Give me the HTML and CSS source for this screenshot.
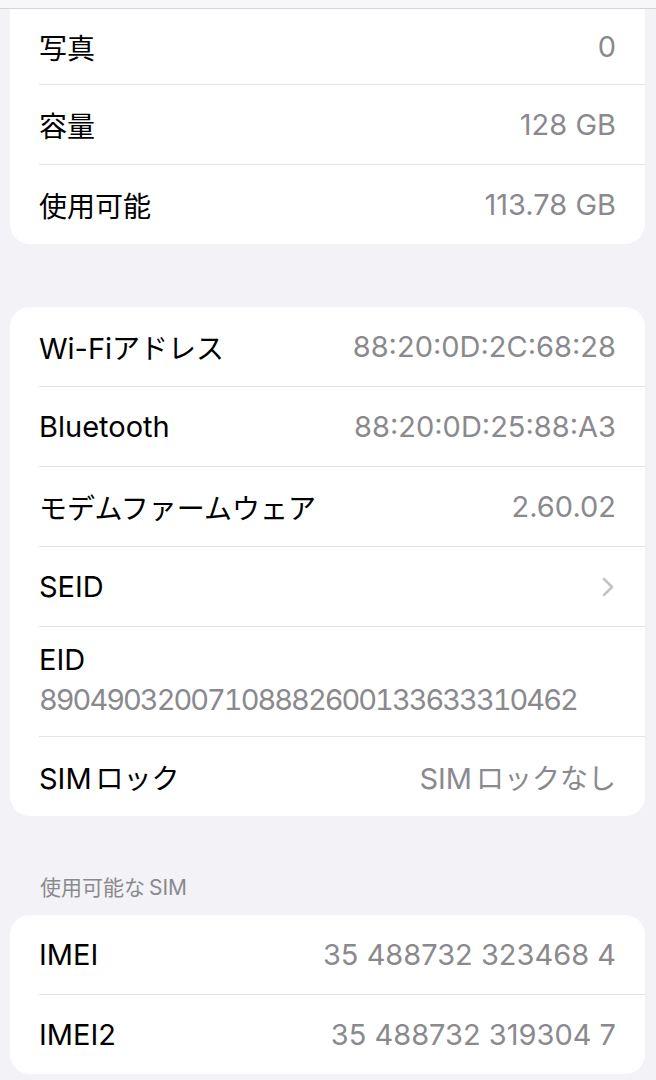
FILE: index.html
```html
<!DOCTYPE html>
<html lang="ja">
<head>
    <meta charset="UTF-8">
    <meta name="viewport" content="width=device-width, initial-scale=1.0">
    <title>情報</title>
    <link rel="stylesheet" href="styles.css">
</head>
<body>
    <div class="navbar"></div>

    <section class="group group-first">
        <div class="row"><span class="label ja">写真</span><span class="value">0</span></div>
        <div class="row"><span class="label ja">容量</span><span class="value">128 GB</span></div>
        <div class="row"><span class="label ja">使用可能</span><span class="value">113.78 GB</span></div>
    </section>

    <section class="group">
        <div class="row"><span class="label">Wi-Fi<span class="ja">アドレス</span></span><span class="value">88:20:0D:2C:68:28</span></div>
        <div class="row"><span class="label">Bluetooth</span><span class="value">88:20:0D:25:88:A3</span></div>
        <div class="row"><span class="label ja">モデムファームウェア</span><span class="value">2.60.02</span></div>
        <div class="row"><span class="label">SEID</span>
            <svg class="chevron" width="14" height="22" viewBox="0 0 14 22">
                <path d="M3 3 L11 11 L3 19" fill="none" stroke="#c4c4c7" stroke-width="2.6" stroke-linecap="round" stroke-linejoin="round"/>
            </svg>
        </div>
        <div class="row row-stack"><span class="label">EID</span><span class="value mono">89049032007108882600133633310462</span></div>
        <div class="row"><span class="label">SIM<span class="ja sp">ロック</span></span><span class="value">SIM<span class="ja sp">ロックなし</span></span></div>
    </section>

    <div class="group-title">使用可能な<span class="sp">SIM</span></div>
    <section class="group group-last">
        <div class="row"><span class="label">IMEI</span><span class="value">35 488732 323468 4</span></div>
        <div class="row"><span class="label">IMEI2</span><span class="value">35 488732 319304 7</span></div>
    </section>
</body>
</html>
```

FILE: styles.css
```css
body {
    margin: 0;
    background: #f2f2f7;
    font-family: Inter, "Noto Sans CJK JP", sans-serif;
    font-size: 29px;
    height: 1080px;
    overflow: hidden;
}

.navbar {
    height: 8px;
    background: #f7f7f9;
    border-bottom: 1px solid #d4d4d8;
}

.group {
    background: #fff;
    margin: 63px 11px 0 10px;
    border-radius: 20px;
    padding-left: 29px;
}

.group-first {
    margin-top: 0;
    border-radius: 0 0 20px 20px;
}

.group-first .row:first-child {
    height: 75px;
}

.row {
    display: flex;
    justify-content: space-between;
    align-items: center;
    height: 79px;
    padding-right: 29px;
    border-bottom: 1px solid #e3e3e6;
}

.row:last-child {
    border-bottom: none;
}

.label {
    color: #000;
}

.value {
    color: #8a8a8e;
}

.ja {
    font-size: 28px;
}

.sp {
    margin-left: 4px;
}

.row-stack {
    flex-direction: column;
    align-items: flex-start;
    justify-content: center;
    height: 110px;
    padding-bottom: 4px;
    box-sizing: border-box;
    gap: 4px;
}

.row-stack span {
    line-height: 36px;
}

.mono {
    font-variant-numeric: tabular-nums;
    letter-spacing: -2px;
}

.chevron {
    margin-right: 1px;
}

.group-title {
    color: #8a8a8e;
    font-size: 21px;
    line-height: 24px;
    margin: 60px 0 15px 40px;
}

.group-last {
    margin-top: 0;
}
```
